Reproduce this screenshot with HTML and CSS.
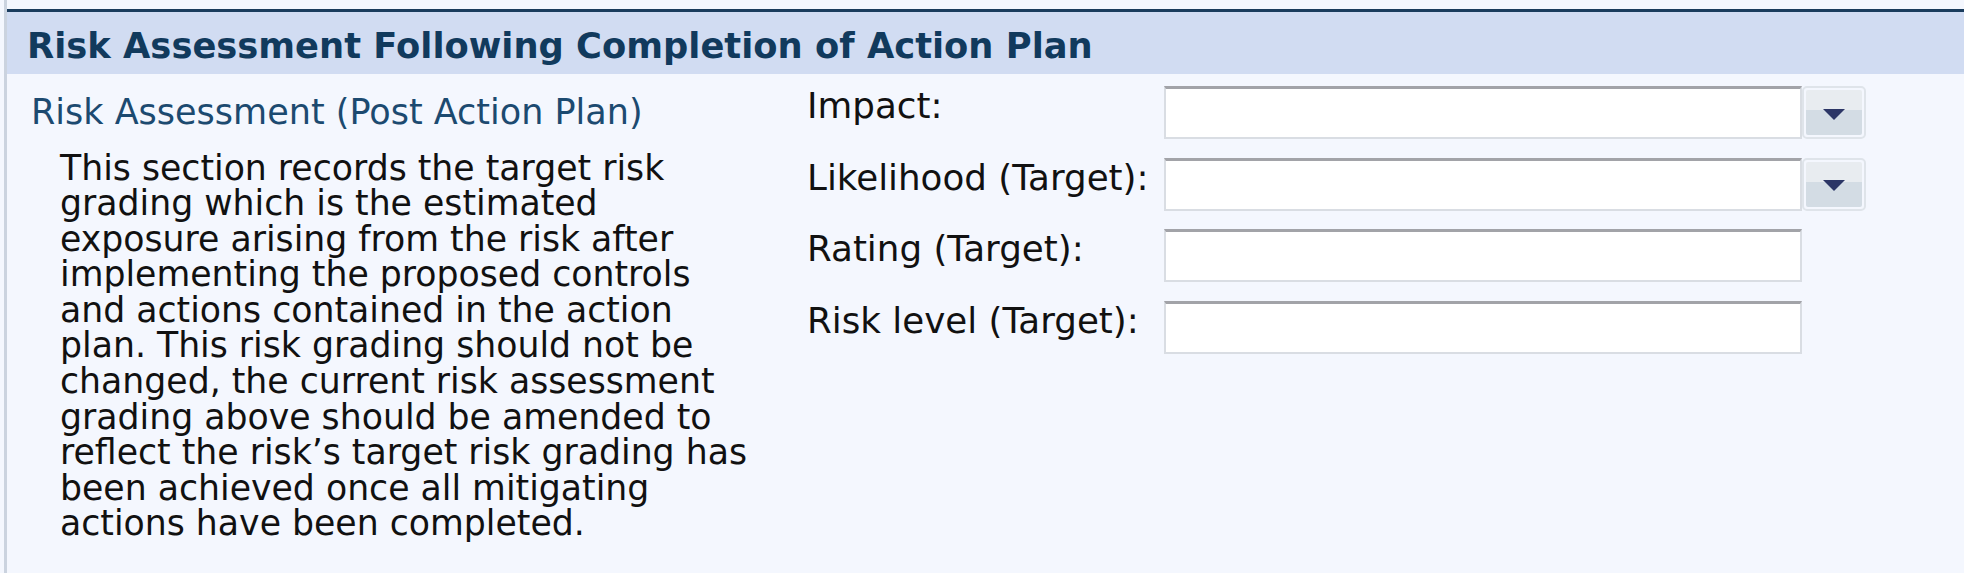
FILE: index.html
```html
<!DOCTYPE html>
<html lang="en">
<head>
<meta charset="utf-8">
<title>Risk Assessment Following Completion of Action Plan</title>
<link rel="stylesheet" href="styles.css">
</head>
<body>
<div class="panel">
  <div class="section-header">Risk Assessment Following Completion of Action Plan</div>
  <div class="section-body">
    <div class="intro">
      <div class="intro-title">Risk Assessment (Post Action Plan)</div>
      <p class="intro-text">This section records the target risk grading which is the estimated exposure arising from the risk after implementing the proposed controls and actions contained in the action plan. This risk grading should not be changed, the current risk assessment grading above should be amended to reflect the risk’s target risk grading has been achieved once all mitigating actions have been completed.</p>
    </div>
    <div class="fields">
      <div class="field-row">
        <label class="field-label">Impact:</label>
        <div class="combo">
          <div class="text-box"></div>
          <div class="combo-btn"><span class="arrow"></span></div>
        </div>
      </div>
      <div class="field-row">
        <label class="field-label">Likelihood (Target):</label>
        <div class="combo">
          <div class="text-box"></div>
          <div class="combo-btn"><span class="arrow"></span></div>
        </div>
      </div>
      <div class="field-row">
        <label class="field-label">Rating (Target):</label>
        <div class="combo">
          <div class="text-box"></div>
        </div>
      </div>
      <div class="field-row">
        <label class="field-label">Risk level (Target):</label>
        <div class="combo">
          <div class="text-box"></div>
        </div>
      </div>
    </div>
  </div>
</div>
</body>
</html>
```
FILE: styles.css
```css
html, body {
  margin: 0;
  padding: 0;
  background: #f4f7fe;
  height: 100%;
}
body {
  font-family: "DejaVu Sans", Verdana, sans-serif;
  font-size: 35px;
  color: #111111;
  overflow: hidden;
}
.panel {
  margin-left: 4px;
  border-left: 3px solid #cbd3df;
  padding-top: 9px;
  min-height: 100%;
  box-sizing: border-box;
}
.section-header {
  border-top: 3px solid #1a3c5d;
  background: #d1dcf2;
  height: 56px;
  line-height: 56px;
  padding: 6px 0 0 20px;
  font-size: 35.3px;
  font-weight: bold;
  color: #113a5d;
  white-space: nowrap;
}
.section-body {
  display: grid;
  grid-template-columns: 800px 1fr;
}
.intro {
  padding-top: 17px;
}
.intro-title {
  padding-left: 24px;
  line-height: 42px;
  color: #1c4a70;
}
.intro-text {
  margin: 17.5px 0 0 53px;
  width: 696px;
  font-size: 34.7px;
  line-height: 35.6px;
}
.fields {
  padding-top: 12px;
  display: flex;
  flex-direction: column;
  gap: 18.5px;
}
.field-row {
  display: grid;
  grid-template-columns: 357px auto;
  align-items: start;
}
.field-label {
  font-size: 35.7px;
  line-height: 40px;
  white-space: nowrap;
}
.combo {
  display: flex;
  height: 53px;
}
.text-box {
  width: 638px;
  box-sizing: border-box;
  background: #ffffff;
  border: 2px solid #d9dde3;
  border-top: 3px solid #a2a3a8;
}
.combo-btn {
  width: 64px;
  box-sizing: border-box;
  border: 2px solid #dfe4ea;
  border-radius: 5px;
  padding: 2px;
  background: #f4f7fe;
  display: flex;
}
.combo-btn .arrow {
  flex: 1;
  border-radius: 2px;
  background: linear-gradient(#e8ecf0 0, #e8ecf0 45%, #d3dce4 45%, #d3dce4 100%);
  position: relative;
}
.combo-btn .arrow::after {
  content: "";
  position: absolute;
  left: 50%;
  top: 50%;
  margin-left: -11px;
  margin-top: -4px;
  border-left: 11px solid transparent;
  border-right: 11px solid transparent;
  border-top: 11px solid #2c3666;
}
```
